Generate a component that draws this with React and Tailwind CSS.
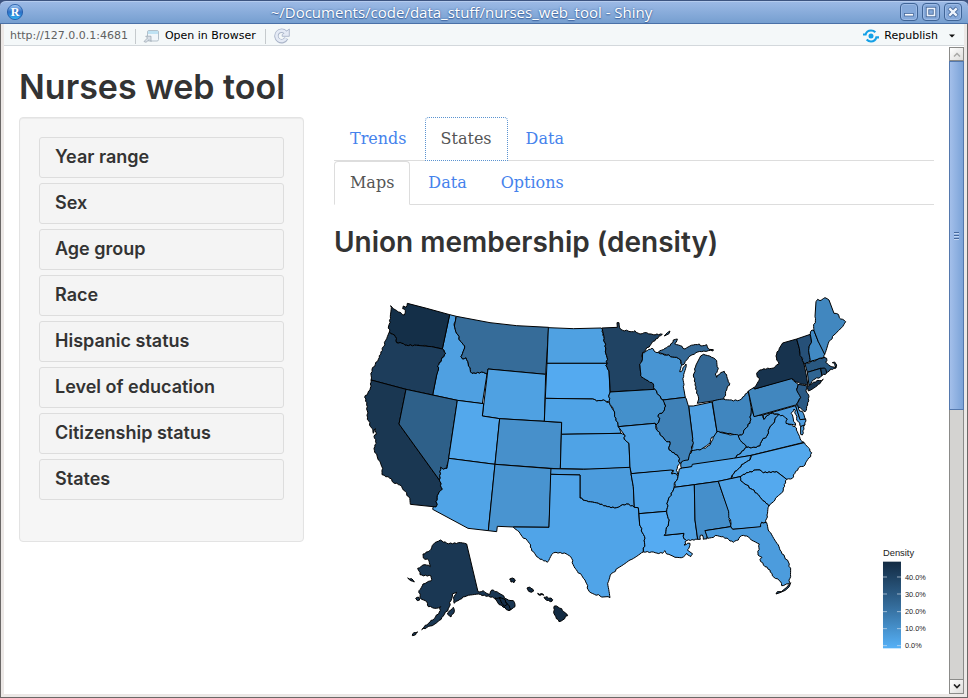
import React from "react";

const HEADING = "font-['Inter','Open_Sans',sans-serif] font-semibold text-[#333333]";

// A "~" in front of a point makes the segment that leads to it ragged (coast or river).
function outline(points) {
  const list = points.split(" ").map((p) => {
    const rough = p[0] === "~";
    const [x, y] = (rough ? p.slice(1) : p).split(",").map(Number);
    return { x, y, rough };
  });
  let d = `M${list[0].x} ${list[0].y}`;
  for (let i = 1; i <= list.length; i++) {
    const a = list[i - 1];
    const b = list[i % list.length];
    if (b.rough) {
      const flip = a.x > b.x || (a.x === b.x && a.y > b.y);
      const s = flip ? b : a;
      const e = flip ? a : b;
      const length = Math.hypot(e.x - s.x, e.y - s.y);
      const n = Math.max(1, Math.round(length / 6));
      const mids = [];
      for (let k = 1; k < n; k++) {
        const h = Math.sin(s.x * 12.9 + e.y * 78.2 + k * 37.7) * 43758.5;
        const off = (h - Math.floor(h) - 0.5) * 5;
        const t = k / n;
        mids.push([
          s.x + (e.x - s.x) * t - ((e.y - s.y) / length) * off,
          s.y + (e.y - s.y) * t + ((e.x - s.x) / length) * off,
        ]);
      }
      if (flip) mids.reverse();
      mids.forEach(([x, y]) => (d += `L${x.toFixed(1)} ${y.toFixed(1)}`));
    }
    d += `L${b.x} ${b.y}`;
  }
  return d + "Z";
}

const REGIONS = [
  {
    x: 0,
    y: 0,
    states: [
      ["ID", "#4fa0e1", "299,74 319,79 ~313,108 ~320,130 ~335,157 ~344,168 ~333,200 ~338,207 ~348,203 ~355,222 ~366,250 ~400,247 ~411,252 397,341 322,331 248,315 260,255 ~265,240 ~262,228 ~287,190 ~277,177"],
      ["WA", "#142f48", "~122,47 ~135,59 ~150,67 ~163,75 ~166,62 ~158,56 ~160,48 ~168,52 ~172,40 230,55 299,74 277,177 245,170 ~200,166 ~175,167 ~155,160 ~140,158 ~136,140 ~118,126 ~116,108 ~121,80"],
      ["OR", "#1d3d5b", "118,126 ~136,140 ~140,158 ~155,160 ~175,167 ~200,166 245,170 277,177 ~287,190 ~262,228 ~265,240 260,255 248,315 168,298 63,270 ~66,238 ~85,208 ~100,170 ~112,140"],
      ["CA", "#1a3752", "~63,270 168,298 147,402 268,570 ~277,598 ~265,612 ~258,635 ~262,643 ~258,651 181,643 ~176,620 ~160,600 ~150,585 ~130,578 ~125,567 ~96,554 ~98,535 ~85,510 ~72,475 ~79,460 ~72,440 ~79,433 ~76,416 ~70,430 ~66,415 ~52,388 ~52,350 ~44,322 ~60,300"],
      ["NV", "#2e6089", "168,298 322,331 296,505 ~291,535 ~280,538 ~272,532 ~268,570 147,402"],
      ["MT", "#366c99", "319,79 420,98 500,107 596,112 587,253 414,237 411,252 ~400,247 ~366,250 ~355,222 ~348,203 ~338,207 ~333,200 ~344,168 ~335,157 ~320,130 ~313,108"],
      ["WY", "#4fa1e2", "414,237 587,253 583,394 449,386 397,378"],
      ["UT", "#53a8ec", "322,331 401,341 397,378 449,386 435,523 296,505"],
      ["AZ", "#50a4e7", "296,505 435,523 415,722 354,715 248,658 ~250,650 258,651 ~262,643 ~258,635 ~265,612 ~277,598 ~268,570 ~272,532 ~280,538 ~291,535"],
      ["CO", "#4790cb", "449,386 583,394 635,397 631,537 435,523"],
      ["NM", "#4994d0", "435,523 604,536 597,712 490,711 442,709 440,725 415,722"],
    ],
  },
  {
    x: 540,
    y: 30,
    states: [
      ["ND", "#4fa1e2", "55,83 130,86 214,84 ~222,110 ~227,150 ~232,190 51,190"],
      ["SD", "#54aaf0", "51,190 232,190 ~228,197 ~237,212 240,276 ~237,285 ~240,307 ~220,300 ~200,303 ~188,297 46,295"],
      ["NE", "#4fa3e6", "46,295 188,297 ~200,303 ~220,300 ~240,310 ~250,330 ~258,355 ~265,380 ~273,400 94,403 95,367 43,364"],
      ["KS", "#4fa3e6", "94,403 273,400 ~286,408 ~283,418 ~297,430 300,503 180,508 91,506"],
      ["MN", "#204363", "216,84 262,82 261,68 267,68 ~272,88 ~300,95 ~315,92 ~330,102 ~350,98 ~370,104 ~397,103 ~365,130 ~338,158 ~337,180 ~329,192 ~332,228 ~350,240 ~370,252 ~374,268 241,276 237,212 ~228,197 ~232,190 ~227,150 ~222,110"],
      ["Isle Royale", "#346895", "403,108 412,98 420,93 417,101"],
      ["WI", "#4895d3", "338,158 ~352,152 ~366,145 ~372,153 ~385,158 ~410,165 ~440,172 ~452,180 ~456,195 ~449,215 ~454,215 ~468,192 ~461,230 ~460,260 ~466,292 399,300 ~385,285 ~374,268 ~370,252 ~350,240 ~332,228 ~329,192 ~337,180"],
      ["Upper Michigan", "#346895", "385,157 ~405,145 ~420,138 ~430,120 ~442,117 ~434,131 ~445,135 ~465,147 ~490,135 ~508,132 ~512,138 ~530,134 ~537,148 550,149 549,153 ~535,152 ~515,155 ~498,158 ~480,168 ~470,180 ~458,195 ~452,180 ~440,172 ~410,165"],
      ["MI", "#346895", "512,168 ~520,163 ~545,172 ~560,182 ~565,205 ~556,222 ~560,232 ~572,218 ~583,214 ~592,235 ~599,250 ~590,270 ~582,298 548,303 502,310 ~505,290 ~495,255 ~490,225 ~498,195"],
      ["IA", "#4490cb", "241,276 374,268 ~385,285 ~399,300 ~407,318 ~400,335 ~385,345 ~388,360 ~380,374 375,370 265,380 ~258,355 ~250,330 ~238,307 ~237,285"],
      ["MO", "#50a2e4", "265,380 375,370 ~380,390 ~400,412 ~410,425 ~420,425 ~418,450 ~445,470 ~450,490 ~442,505 ~440,530 ~427,524 ~430,511 304,521 300,503 297,430 ~283,418 ~286,408"],
      ["IN", "#4fa0e2", "476,318 490,318 546,306 561,395 ~560,408 ~545,412 ~540,430 ~525,440 ~510,450 ~482,455 ~488,435 488,415"],
      ["IL", "#3f81b7", "399,300 466,292 ~476,320 488,415 ~488,435 ~480,460 ~475,480 ~455,488 ~450,490 ~445,470 ~418,450 ~420,425 ~410,425 ~400,412 ~380,390 ~380,372 ~388,360 ~385,345 ~400,335 ~407,318"],
    ],
  },
  {
    x: 990,
    y: -15,
    states: [
      ["OH", "#4086bf", "97,350 ~130,342 ~160,348 ~185,342 ~205,318 214,370 ~213,390 ~210,415 ~195,432 ~185,450 ~175,453 ~150,445 ~120,442 ~111,440"],
      ["KY", "#4796d4", "111,440 ~120,442 ~150,450 ~175,450 ~182,467 ~200,487 ~162,521 40,541 37,546 4,550 ~5,530 ~25,525 ~35,497 ~60,495 ~90,480 ~100,457"],
      ["VA", "#4fa1e4", "297,387 ~325,402 ~322,415 ~345,425 ~352,440 ~360,460 ~372,472 213,511 162,521 ~200,487 ~215,488 ~240,482 ~247,465 ~262,450 ~268,430 ~280,415 ~285,400"],
      ["WV", "#4895d4", "214,370 222,393 249,390 ~252,403 ~265,390 ~278,385 ~297,388 ~285,400 ~280,415 ~268,430 ~262,450 ~247,465 ~240,482 ~215,488 ~200,487 ~182,467 ~175,453 ~185,450 ~195,432 ~210,415 ~213,390"],
      ["MD", "#4d9cdf", "249,390 347,362 360,403 377,402 ~375,420 ~362,425 ~350,400 ~342,372 ~333,385 ~340,402 ~347,421 ~335,418 ~318,415 ~322,402 ~297,388 ~278,383 ~265,390 ~252,403"],
      ["Eastern Shore", "#4fa1e4", "362,425 ~373,420 ~367,450 ~362,448"],
      ["DE", "#4a98d7", "347,362 353,358 ~356,372 ~370,385 ~376,402 360,404"],
      ["PA", "#4187bf", "205,318 221,308 224,312 330,280 ~345,290 ~355,298 ~350,312 ~358,325 ~362,338 ~347,360 222,395"],
      ["NJ", "#2b5a85", "355,298 382,303 ~378,316 ~387,335 ~383,360 ~375,380 ~355,367 ~350,357 ~362,338 ~350,315"],
      ["NY", "#17334e", "308,174 350,162 358,190 ~360,205 372,237 378,265 384,302 ~345,290 ~335,281 224,312 221,308 ~238,285 ~230,265 ~240,255 ~275,250 ~297,237 ~288,213 ~298,190"],
      ["Long Island", "#17334e", "382,307 ~400,292 ~430,283 ~415,298 ~385,318"],
      ["VT", "#265078", "350,162 391,148 ~394,165 ~387,190 ~389,230 372,237 ~360,205 358,190"],
      ["NH", "#418ac4", "391,148 ~396,135 402,137 415,170 ~434,208 ~432,217 389,230 ~387,190 ~394,165"],
      ["ME", "#4187bf", "402,137 ~405,95 408,50 ~413,43 ~420,47 ~435,38 ~447,45 462,85 ~475,88 ~482,102 ~497,110 ~485,128 ~462,150 ~445,175 ~434,208 415,170"],
      ["MA", "#295881", "375,237 ~432,217 ~440,220 ~437,232 ~450,243 ~468,247 ~464,235 457,233 464,231 470,240 ~467,250 ~452,252 ~442,262 422,250 382,262"],
      ["CT", "#2f6592", "382,262 422,250 426,272 ~400,285 ~387,300"],
      ["RI", "#234b6e", "422,250 434,249 ~440,264 ~426,272"],
    ],
  },
  {
    x: 510,
    y: 450,
    states: [
      ["OK", "#4c9cdd", "93,86 190,88 330,82 333,101 340,140 343,202 ~320,192 ~290,203 ~262,200 ~235,190 ~205,185 ~180,174 180,105 92,103"],
      ["TX", "#50a4e8", "92,103 180,105 180,174 ~205,185 ~235,190 ~262,200 ~290,203 ~320,192 ~343,202 355,203 359,255 ~375,295 ~370,336 ~330,360 ~275,400 ~263,430 ~270,473 ~240,468 ~208,455 ~195,420 ~165,385 ~152,350 ~133,339 ~108,337 ~95,344 ~82,367 ~50,350 ~35,332 ~32,315 ~0,280 ~-20,261 87,262"],
      ["AR", "#50a4e8", "333,101 453,90 ~460,92 ~455,102 ~470,103 ~474,110 ~466,125 ~460,150 ~445,180 ~440,214 357,221 355,203 343,202 340,140"],
      ["LA", "#55abf2", "357,221 440,214 ~448,240 ~433,286 492,280 ~490,290 ~500,302 ~492,315 ~510,310 ~502,330 ~518,342 ~512,350 ~500,340 ~490,351 ~465,352 ~440,342 ~435,332 ~428,340 ~400,336 ~370,336 ~375,295 ~359,255"],
      ["TN", "#53a8ec", "478,87 487,84 515,80 517,73 640,55 695,46 ~690,60 ~670,72 ~655,87 ~637,105 632,116 595,124 523,134 463,142 ~466,125 ~474,110"],
      ["MS", "#50a2e4", "463,142 523,134 525,240 533,298 ~500,302 ~490,290 492,280 433,286 ~448,240 ~440,214 ~445,180 ~460,150"],
      ["AL", "#458fcb", "523,134 595,124 ~626,215 ~632,260 555,272 ~563,285 ~560,297 ~550,298 ~547,285 ~541,286 ~541,298 533,298 525,240"],
      ["NC", "#53a8ec", "695,46 853,8 ~875,38 ~872,50 ~855,75 ~840,80 ~820,105 ~817,115 ~800,118 770,95 ~730,99 ~720,90 ~690,95 ~660,110 632,116 ~637,105 ~655,87 ~670,72 ~690,60"],
      ["SC", "#54a9ee", "660,110 ~690,95 ~720,90 ~730,99 ~770,95 800,118 ~790,150 ~765,180 ~747,198 ~735,185 ~710,160 ~680,135 ~662,122"],
      ["GA", "#50a3e6", "595,124 632,116 660,110 ~662,122 ~680,135 ~710,160 ~735,185 ~747,198 ~741,225 ~738,248 ~725,247 ~722,262 638,268 ~632,258 ~626,215"],
      ["FL", "#4c9cdd", "555,272 632,260 638,268 722,260 ~725,247 ~740,248 ~748,275 ~775,315 ~780,330 ~808,372 ~812,410 ~806,432 ~785,437 ~782,425 ~762,412 ~750,390 ~735,380 ~720,358 ~726,352 ~714,345 ~718,312 ~700,303 ~680,288 ~665,287 ~655,300 ~640,307 ~630,303 ~610,290 ~592,287 ~563,295"],
      ["Florida Keys", "#26527a", "812,428 808,440 796,451 780,458 768,462 772,455 784,455 800,442"],
    ],
  },
  {
    x: 135,
    y: 720,
    states: [
      ["AK", "#1a3753", "84,72 ~104,62 ~116,42 ~136,30 ~155,40 ~190,38 ~215,42 249,185 ~265,182 ~285,193 ~290,180 ~310,188 ~335,207 ~355,212 ~360,230 ~342,242 ~325,228 ~305,208 ~280,198 ~250,192 ~215,198 ~195,208 ~178,220 ~175,205 ~185,187 ~172,192 ~168,212 ~160,236 ~145,258 ~128,276 ~105,288 ~80,299 ~100,280 ~118,266 ~133,246 ~137,230 ~118,235 ~100,230 ~95,215 ~75,203 ~72,182 ~84,162 ~108,153 ~108,138 ~75,134 ~68,115 ~90,104 ~106,110 ~102,92 ~85,84"],
      ["Kodiak", "#1a3753", "~175,232 ~178,245 ~168,261 ~157,252 ~168,240"],
      ["St Lawrence", "#1a3753", "~38,144 ~50,146 ~58,156 ~47,152"],
      ["Nunivak", "#1a3753", "~62,205 ~72,202 ~74,210 ~67,212"],
      ["Unimak", "#1a3753", "~52,317 ~57,308 ~68,306 ~62,314"],
      ["Alexander", "#142c45", "~300,204 ~315,202 ~335,220 ~348,238 ~340,241 ~320,226 ~308,218"],
      ["Baranof", "#142c45", "~312,205 ~325,206 ~338,222 ~328,229 ~318,215"],
      ["Kauai", "#132b43", "~344,147 ~352,144 ~361,150 ~357,158 ~348,156"],
      ["Oahu", "#132b43", "~396,174 ~404,171 ~416,183 ~409,187 ~401,184"],
      ["Molokai", "#132b43", "~428,190 ~445,193 ~446,196 ~430,194"],
      ["Maui", "#132b43", "~447,202 ~456,200 ~473,209 ~466,215 ~455,211"],
      ["HI", "#132b43", "~478,228 ~500,236 ~518,257 ~492,275 ~484,266 ~476,245"],
    ],
  },
];

const TICKS = [
  ["40.0%", 861],
  ["30.0%", 912],
  ["20.0%", 965],
  ["10.0%", 1016],
  ["0.0%", 1067],
];

function DensityMap() {
  return (
    <svg viewBox="-48 -60 1800 1200" className="block h-auto w-full" role="img" aria-label="Union membership by state">
      <defs>
        <linearGradient id="density" x1="0" y1="0" x2="0" y2="1">
          <stop offset="0" stopColor="#132b43" />
          <stop offset="0.5" stopColor="#336a98" />
          <stop offset="1" stopColor="#56b1f7" />
        </linearGradient>
      </defs>
      {REGIONS.map((region) => (
        <g key={region.x} transform={`translate(${region.x} ${region.y})`} stroke="#000" strokeWidth="3" strokeLinejoin="round">
          {region.states.map(([name, fill, points]) => (
            <path key={name} d={outline(points)} fill={fill} />
          ))}
        </g>
      ))}
      <g className="font-['Liberation_Sans',sans-serif]" fill="#222">
        <text x="1599" y="797" fontSize="28">Density</text>
        <rect x="1599" y="815" width="54" height="260" fill="url(#density)" />
        {TICKS.map(([label, y]) => (
          <g key={label}>
            <path d={`M1599 ${y}h12M1641 ${y}h12`} stroke="#d6e4f0" strokeWidth="2" />
            <text x="1665" y={y + 8} fontSize="22">{label}</text>
          </g>
        ))}
      </g>
    </svg>
  );
}

function RLogo() {
  return (
    <svg viewBox="0 0 16 16" className="size-4">
      <defs>
        <linearGradient id="ball" x1="0" y1="0" x2="0" y2="1">
          <stop offset="0" stopColor="#a7cdf5" />
          <stop offset="0.5" stopColor="#2d6fc6" />
          <stop offset="1" stopColor="#31b6f5" />
        </linearGradient>
      </defs>
      <circle cx="8" cy="8" r="7.6" fill="url(#ball)" stroke="#1d55a5" strokeWidth="0.8" />
      <text x="8" y="12" textAnchor="middle" fontSize="12" fill="#fff" className="font-['Liberation_Serif',serif] font-bold">R</text>
    </svg>
  );
}

function WindowButton({ label, children }) {
  return (
    <button type="button" aria-label={label} className="size-[18px] rounded border border-[#3f6496] bg-[#85a9da] shadow-[inset_0_0_0_1px_#9dbbe6]">
      <svg viewBox="0 0 16 16" className="block size-4">{children}</svg>
    </button>
  );
}

function TitleBar() {
  return (
    <header className="flex h-6 items-center rounded-t-md border-t border-b border-t-[#3d5480] border-b-[#4a71a8] bg-linear-to-b from-[#9dbae6] to-[#769fd0] pr-[6px] pl-[7px] shadow-[inset_0_1px_0_#b4cbee]">
      <RLogo />
      <h1 className="flex-1 text-center font-['Open_Sans','Noto_Sans',sans-serif] text-[15px] leading-5 font-medium text-white [text-shadow:0_0_2px_#3f66a0,0_1px_1px_#3f66a0]">
        ~/Documents/code/data_stuff/nurses_web_tool - Shiny
      </h1>
      <div className="flex gap-1">
        <WindowButton label="Minimize">
          <rect x="3.5" y="9.500" width="9" height="2.500" fill="#fff" stroke="#47699b" strokeWidth="0.8" />
        </WindowButton>
        <WindowButton label="Maximize">
          <rect x="4.500" y="4.500" width="7" height="7" fill="none" stroke="#47699b" strokeWidth="3.4" />
          <rect x="4.500" y="4.500" width="7" height="7" fill="none" stroke="#eef4fc" strokeWidth="1.6" />
        </WindowButton>
        <WindowButton label="Close">
          <path d="M4 4l8 8M12 4l-8 8" stroke="#47699b" strokeWidth="4.2" />
          <path d="M4.300 4.300l7.400 7.400M11.700 4.300l-7.400 7.400" stroke="#eef4fc" strokeWidth="2.400" />
        </WindowButton>
      </div>
    </header>
  );
}

function Toolbar() {
  return (
    <div className="flex h-[22px] items-center border-b border-[#d3d8dc] bg-[#f4f8f9] pt-[3px] pr-[9px] pl-[6px] font-['DejaVu_Sans',sans-serif] text-[11px] text-black">
      <span className="text-[#606060]">http://127.0.0.1:4681</span>
      <span className="ml-[7px] h-[15px] w-px bg-[#c5cacd]" />
      <button type="button" className="ml-[7px] flex items-center gap-[6px]">
        <svg viewBox="0 0 16 14" className="h-[14px] w-4">
          <rect x="4.500" y="1.500" width="11" height="10.500" rx="1.500" fill="#f1f6fa" stroke="#b3c0ca" />
          <path d="M5 2h10v3H5z" fill="#bfe2f3" />
          <path d="M1 12.500l3.500-3.500-1.800-1.800H8v5.300l-1.800-1.800L3 13.300z" fill="#d9e0e8" stroke="#97a2ae" strokeWidth="0.7" />
        </svg>
        Open in Browser
      </button>
      <span className="ml-[9px] h-[15px] w-px bg-[#c5cacd]" />
      <button type="button" aria-label="Reload" className="ml-2">
        <svg viewBox="0 0 16 16" className="size-4" fill="none">
          <path d="M12.300 10.300A5.200 5.200 0 1 1 11.500 4.500" stroke="#a9b4c8" strokeWidth="4.400" />
          <path d="M15.300 1v7.300H8.200V6.600L15.300 1z" fill="#e4eaf5" stroke="#a9b4c8" strokeWidth="0.9" />
          <path d="M12.100 10.400A5.200 5.200 0 1 1 11.800 4.700" stroke="#e4eaf5" strokeWidth="2.700" />
        </svg>
      </button>
      <button type="button" className="ml-auto flex items-center gap-[5px]">
        <svg viewBox="0 0 16 14" className="h-[14px] w-4" fill="none">
          <circle cx="8" cy="7" r="2.500" fill="#14a0e6" />
          <path d="M0 5.500h2.600c.8-2.800 3-4 5.400-4 2 0 3.200.6 4.300 1.800M16 8.300h-2.600c-.8 2.800-3 4.200-5.400 4.200-2 0-3.200-.7-4.300-1.900" stroke="#14a0e6" strokeWidth="2.200" />
        </svg>
        Republish
        <svg viewBox="0 0 6 4" className="ml-[6px] h-1 w-[6px]">
          <path d="M0 0.500h6L3 3.500z" fill="#111" />
        </svg>
      </button>
    </div>
  );
}

const FILTERS = [
  "Year range",
  "Sex",
  "Age group",
  "Race",
  "Hispanic status",
  "Level of education",
  "Citizenship status",
  "States",
];

function Filters() {
  return (
    <aside className="w-1/3 px-[15px]">
      <div className="flex flex-col gap-[5px] rounded border border-[#e3e3e3] bg-[#f6f6f6] px-[19px] pt-[19px] pb-[41px] shadow-[inset_0_1px_1px_rgba(0,0,0,0.05)]">
        {FILTERS.map((name) => (
          <button key={name} type="button" className={`h-[41px] rounded-[3px] border border-[#dddddd] bg-[#f4f4f4] px-[15px] pb-[2px] text-left text-lg leading-5 ${HEADING}`}>
            {name}
          </button>
        ))}
      </div>
    </aside>
  );
}

function Tabs({ label, items, active, focused }) {
  return (
    <nav aria-label={label} className="border-b border-[#dddddd]">
      <ul className="-mb-px flex gap-[2px] font-['DejaVu_Serif',serif] text-base leading-[22px]">
        {items.map((name) => (
          <li key={name}>
            <a
              href={`#${name.toLowerCase()}`}
              className={`block rounded-t border px-[15px] py-[10px] ${
                name !== active
                  ? "border-transparent text-[#4582ec]"
                  : focused
                    ? "border-dotted border-[#5b93d0] bg-white text-[#555555]"
                    : "border-[#dddddd] border-b-white bg-white text-[#555555]"
              }`}
            >
              {name}
            </a>
          </li>
        ))}
      </ul>
    </nav>
  );
}

function Scrollbar() {
  return (
    <div aria-hidden="true" className="mt-px flex w-[15px] flex-col border border-[#8b8b89] bg-[#d4d3d1]">
      <div className="flex h-[13px] items-center justify-center border-b border-[#8b8b89] bg-linear-to-br from-white to-[#dddcda]">
        <svg viewBox="0 0 8 5" className="h-[5px] w-2"><path d="M1 4.500l3-3 3 3" fill="none" stroke="#a9a9a7" strokeWidth="1.500" /></svg>
      </div>
      <div className="-mx-px flex basis-[349px] flex-col items-center justify-center gap-[2px] border border-[#5478ad] bg-linear-to-r from-[#a3bfea] to-[#7ba3d8]">
        <span className="h-px w-[5px] bg-[#46699e] shadow-[0_1px_0_#c2d6f2]" />
        <span className="h-px w-[5px] bg-[#46699e] shadow-[0_1px_0_#c2d6f2]" />
        <span className="h-px w-[5px] bg-[#46699e] shadow-[0_1px_0_#c2d6f2]" />
      </div>
      <div className="mt-auto flex h-[14px] items-center justify-center border-t border-[#8b8b89] bg-linear-to-br from-white to-[#dddcda]">
        <svg viewBox="0 0 8 5" className="h-[5px] w-2"><path d="M1 0.500l3 3 3-3" fill="none" stroke="#222" strokeWidth="1.700" /></svg>
      </div>
    </div>
  );
}

export default function App() {
  return (
    <div className="flex min-h-screen flex-col bg-[#3d5480]">
      <TitleBar />
      <div className="flex flex-1 flex-col border-x border-b border-[#6b6867] bg-[#ece8e6] pr-[3px] pb-[3px] pl-[3px]">
        <Toolbar />
        <div className="flex flex-1 bg-white">
          <main className="flex-1 pb-5">
            <h1 className={`px-[15px] pt-5 pb-[10px] text-[34px] leading-[41px] ${HEADING}`}>Nurses web tool</h1>
            <div className="flex items-start">
              <Filters />
              <section className="w-2/3 px-[15px]">
                <Tabs label="Sections" items={["Trends", "States", "Data"]} active="States" focused />
                <Tabs label="Views" items={["Maps", "Data", "Options"]} active="Maps" />
                <h2 className={`pt-[21px] pb-3 text-[28px] leading-8 ${HEADING}`}>Union membership (density)</h2>
                <DensityMap />
              </section>
            </div>
          </main>
          <Scrollbar />
        </div>
      </div>
    </div>
  );
}
